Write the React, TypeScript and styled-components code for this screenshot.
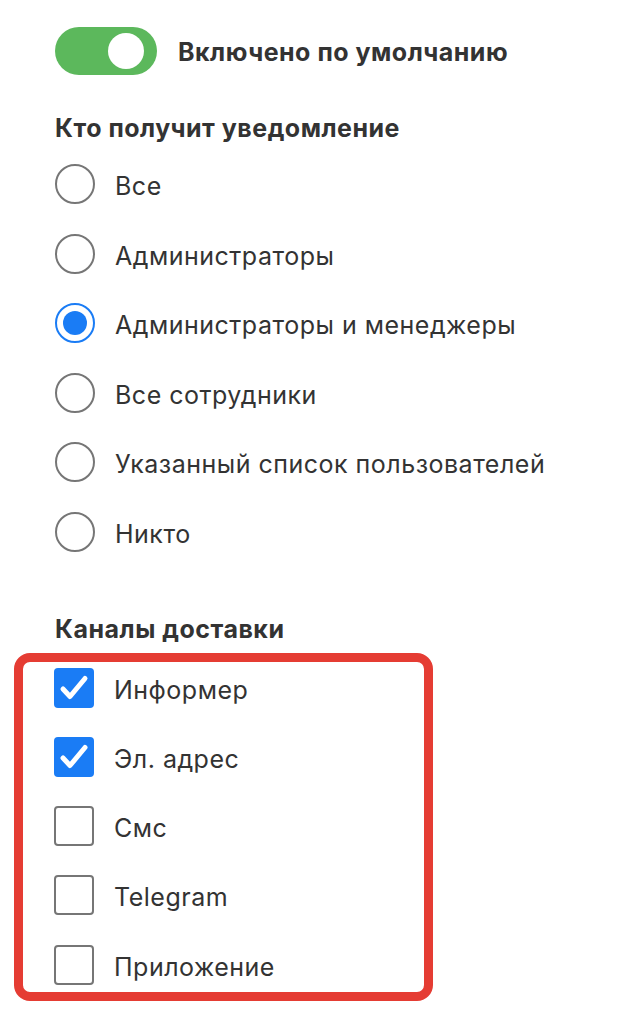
import React, { useState } from "react";
import styled, { createGlobalStyle } from "styled-components";

const Global = createGlobalStyle`
  html, body { margin: 0; padding: 0; background: #ffffff; }
  body { font-family: "Inter", "Noto Sans", sans-serif; color: #333333; }
`;

const Page = styled.div`
  padding: 27px 0 0 55px;
  display: flex;
  flex-direction: column;
`;

const ToggleRow = styled.label`
  display: flex;
  align-items: center;
  gap: 21px;
  height: 48px;
`;

const Track = styled.span<{ $on: boolean }>`
  position: relative;
  display: inline-block;
  width: 102px;
  height: 48px;
  border-radius: 24px;
  background: ${(p) => (p.$on ? "#5cb85c" : "#cccccc")};
  flex: none;
`;

const Knob = styled.span<{ $on: boolean }>`
  position: absolute;
  top: 6px;
  left: ${(p) => (p.$on ? "53px" : "13px")};
  width: 36px;
  height: 36px;
  border-radius: 50%;
  background: #ffffff;
`;

const ToggleText = styled.span`
  font-size: 25px;
  font-weight: 700;
  letter-spacing: 0.5px;
  line-height: 30px;
  padding-top: 2px;
  color: #333333;
`;

const Heading = styled.div<{ $mt: number }>`
  margin-top: ${(p) => p.$mt}px;
  font-size: 25px;
  font-weight: 700;
  letter-spacing: 0.5px;
  line-height: 30px;
  color: #333333;
`;

const List = styled.div`
  display: flex;
  flex-direction: column;
  gap: 29.5px;
  margin-top: 21px;
`;

const Row = styled.label`
  display: flex;
  align-items: center;
  gap: 20px;
  height: 40px;
  cursor: pointer;
`;

const RowText = styled.span`
  font-size: 25px;
  font-weight: 400;
  letter-spacing: 0.5px;
  line-height: 30px;
  padding-top: 4px;
  color: #333333;
`;

const Radio = styled.span<{ $on: boolean }>`
  box-sizing: border-box;
  width: 40px;
  height: 40px;
  border-radius: 50%;
  border: ${(p) => (p.$on ? "2px solid #1a7cf5" : "2px solid #767676")};
  display: flex;
  align-items: center;
  justify-content: center;
  flex: none;
  &::after {
    content: "";
    display: ${(p) => (p.$on ? "block" : "none")};
    width: 24px;
    height: 24px;
    border-radius: 50%;
    background: #1a7cf5;
  }
`;

const Box = styled.span<{ $on: boolean }>`
  box-sizing: border-box;
  width: 40px;
  height: 40px;
  border-radius: 4px;
  background: ${(p) => (p.$on ? "#1a7cf5" : "#ffffff")};
  border: ${(p) => (p.$on ? "none" : "2px solid #767676")};
  display: flex;
  align-items: center;
  justify-content: center;
  flex: none;
`;

const Highlight = styled.div`
  margin-top: 9px;
  margin-left: -41px;
  width: 419px;
  box-sizing: border-box;
  border: 9px solid #e53c33;
  border-radius: 16px;
  padding: 6px 0 7px 31px;
  display: flex;
  flex-direction: column;
  gap: 29.3px;
`;

const radios = [
  "Все",
  "Администраторы",
  "Администраторы и менеджеры",
  "Все сотрудники",
  "Указанный список пользователей",
  "Никто",
];

const channels: { label: string; on: boolean }[] = [
  { label: "Информер", on: true },
  { label: "Эл. адрес", on: true },
  { label: "Смс", on: false },
  { label: "Telegram", on: false },
  { label: "Приложение", on: false },
];

const Check = () => (
  <svg width="40" height="40" viewBox="0 0 40 40">
    <path
      d="M9 21 L16 28.5 L31 10.5"
      fill="none"
      stroke="#ffffff"
      strokeWidth="5"
      strokeLinecap="round"
      strokeLinejoin="round"
    />
  </svg>
);

export default function App() {
  const [on, setOn] = useState(true);
  const [sel, setSel] = useState(2);
  const [ch, setCh] = useState(channels.map((c) => c.on));
  return (
    <>
      <Global />
      <Page>
        <ToggleRow onClick={() => setOn(!on)}>
          <Track $on={on}>
            <Knob $on={on} />
          </Track>
          <ToggleText>Включено по умолчанию</ToggleText>
        </ToggleRow>
        <Heading $mt={38}>Кто получит уведомление</Heading>
        <List>
          {radios.map((r, i) => (
            <Row key={r} onClick={() => setSel(i)}>
              <Radio $on={sel === i} />
              <RowText>{r}</RowText>
            </Row>
          ))}
        </List>
        <Heading $mt={62}>Каналы доставки</Heading>
        <Highlight>
          {channels.map((c, i) => (
            <Row
              key={c.label}
              onClick={() => setCh(ch.map((v, j) => (j === i ? !v : v)))}
            >
              <Box $on={ch[i]}>{ch[i] && <Check />}</Box>
              <RowText>{c.label}</RowText>
            </Row>
          ))}
        </Highlight>
      </Page>
    </>
  );
}
